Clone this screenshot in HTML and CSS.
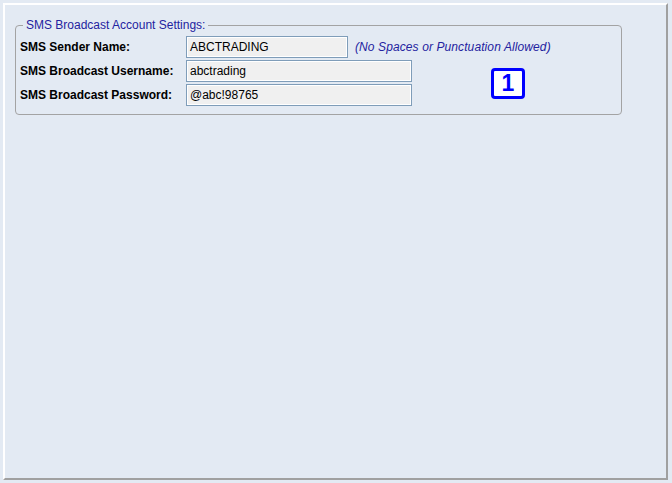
FILE: index.html
```html
<!DOCTYPE html>
<html>
<head>
<meta charset="utf-8">
<link rel="stylesheet" href="styles.css">
</head>
<body>
<div class="panel">
  <fieldset class="group">
    <legend class="group-title">SMS Broadcast Account Settings:</legend>
    <div class="form">
      <label class="label">SMS Sender Name:</label>
      <div class="field-line">
        <div class="input short">ABCTRADING</div>
        <span class="hint">(No Spaces or Punctuation Allowed)</span>
      </div>
      <label class="label">SMS Broadcast Username:</label>
      <div class="field-line"><div class="input long">abctrading</div></div>
      <label class="label">SMS Broadcast Password:</label>
      <div class="field-line"><div class="input long">@abc!98765</div></div>
    </div>
    <div class="badge">1</div>
  </fieldset>
</div>
</body>
</html>
```
FILE: styles.css
```css
html, body {
  margin: 0;
  padding: 0;
  background: #e3eaf3;
  font-family: "Liberation Sans", Arial, sans-serif;
  font-size: 12px;
  color: #000;
}
body {
  padding: 3px;
}
.panel {
  width: 661px;
  height: 473px;
  border-top: 2px solid #ffffff;
  border-left: 2px solid #ffffff;
  border-right: 2px solid #a0a0a0;
  border-bottom: 2px solid #a0a0a0;
  background: #e3eaf3;
}
.group {
  position: relative;
  margin: 13px 0 0 10px;
  box-sizing: border-box;
  width: 607px;
  border: 1px solid #a3a3a3;
  border-radius: 4px;
  padding: 0 4px 8px 4px;
}
.group-title {
  margin-left: 3px;
  padding: 0 3px;
  font-size: 12px;
  line-height: 14px;
  color: #2323a0;
}
.form {
  display: grid;
  grid-template-columns: 166px auto;
  row-gap: 2px;
  margin-top: 4px;
}
.label {
  font-weight: bold;
  line-height: 22px;
  height: 22px;
}
.field-line {
  display: flex;
  align-items: center;
  height: 22px;
}
.input {
  box-sizing: border-box;
  height: 22px;
  border: 1px solid #7f9db9;
  box-shadow: inset 0 0 0 1px #ffffff;
  background: #f0f0f0;
  padding: 0 0 0 3px;
  line-height: 20px;
}
.short { width: 162px; }
.long { width: 226px; }
.hint {
  margin-left: 7px;
  font-style: italic;
  color: #2323a0;
  letter-spacing: 0.1px;
}
.badge {
  position: absolute;
  left: 475px;
  top: 36px;
  width: 34px;
  height: 31px;
  box-sizing: border-box;
  border: 3px solid #0000ff;
  border-radius: 4px;
  background: #ffffff;
  color: #0000ff;
  font-weight: bold;
  font-size: 23px;
  line-height: 25px;
  text-align: center;
}
```
